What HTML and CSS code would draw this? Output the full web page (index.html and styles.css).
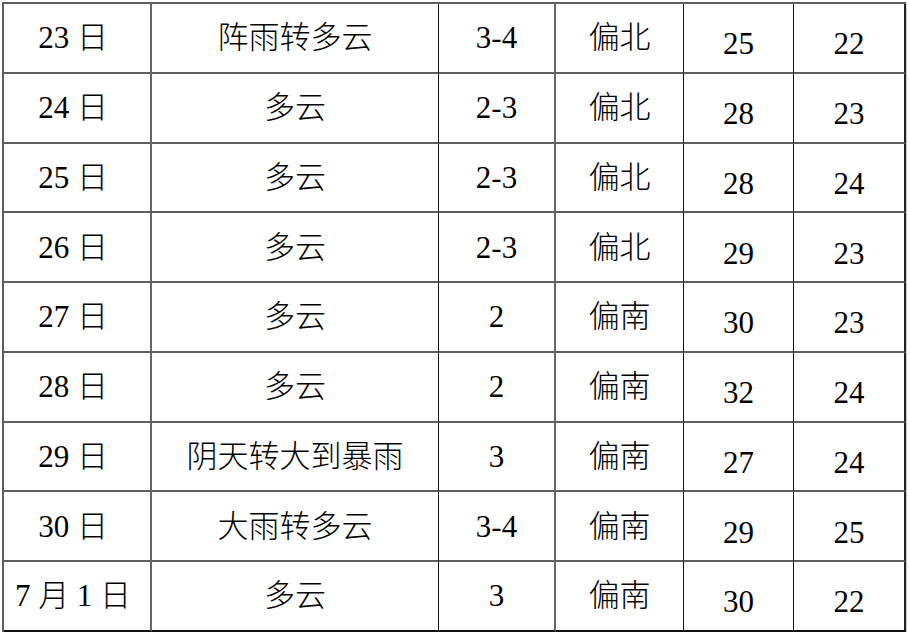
FILE: index.html
```html
<!DOCTYPE html>
<html lang="zh-CN">
<head>
<meta charset="utf-8">
<title>天气预报</title>
<link rel="stylesheet" href="styles.css">
</head>
<body>
<div class="table">
  <div class="c c1">23 日</div><div class="c c2">阵雨转多云</div><div class="c c3">3-4</div><div class="c c4">偏北</div><div class="c c5">25</div><div class="c c6">22</div>
  <div class="c c1">24 日</div><div class="c c2">多云</div><div class="c c3">2-3</div><div class="c c4">偏北</div><div class="c c5">28</div><div class="c c6">23</div>
  <div class="c c1">25 日</div><div class="c c2">多云</div><div class="c c3">2-3</div><div class="c c4">偏北</div><div class="c c5">28</div><div class="c c6">24</div>
  <div class="c c1">26 日</div><div class="c c2">多云</div><div class="c c3">2-3</div><div class="c c4">偏北</div><div class="c c5">29</div><div class="c c6">23</div>
  <div class="c c1">27 日</div><div class="c c2">多云</div><div class="c c3">2</div><div class="c c4">偏南</div><div class="c c5">30</div><div class="c c6">23</div>
  <div class="c c1">28 日</div><div class="c c2">多云</div><div class="c c3">2</div><div class="c c4">偏南</div><div class="c c5">32</div><div class="c c6">24</div>
  <div class="c c1">29 日</div><div class="c c2">阴天转大到暴雨</div><div class="c c3">3</div><div class="c c4">偏南</div><div class="c c5">27</div><div class="c c6">24</div>
  <div class="c c1">30 日</div><div class="c c2">大雨转多云</div><div class="c c3">3-4</div><div class="c c4">偏南</div><div class="c c5">29</div><div class="c c6">25</div>
  <div class="c c1">7 月 1 日</div><div class="c c2">多云</div><div class="c c3">3</div><div class="c c4">偏南</div><div class="c c5">30</div><div class="c c6">22</div>
</div>
</body>
</html>
```

FILE: styles.css
```css
html, body {
  margin: 0;
  padding: 0;
  background: #ffffff;
}

body {
  padding: 2px 0 0 2px;
  font-family: "Liberation Serif", "Noto Sans CJK SC", serif;
  font-size: 31px;
  font-weight: 300;
  color: #000;
}

.table {
  display: grid;
  grid-template-columns: 148px 287px 117px 128px 110px 112px;
  grid-auto-rows: 69.75px;
  width: 904px;
  box-sizing: border-box;
  border-left: 2px solid #5e5e5e;
  border-top: 2px solid #5e5e5e;
  box-shadow: 1px 1px 0 #d0d0d0;
}

.c {
  box-sizing: border-box;
  display: flex;
  align-items: center;
  justify-content: center;
  border-bottom: 2px solid #5e5e5e;
  white-space: pre;
  line-height: 1;
}

.c1 {
  border-right: 2px solid #666;
  padding-right: 8px;
}

.c2 {
  border-right: 1px solid #111;
}

.c3 {
  border-right: 2px solid #666;
}

.c4 {
  border-right: 1px solid #111;
}

.c5 {
  border-right: 1px solid #111;
  padding-top: 12px;
}

.c6 {
  border-right: 2px solid #222;
  padding-top: 12px;
}

.table .c:nth-last-child(-n+6) {
  border-bottom-color: #111;
}
```
